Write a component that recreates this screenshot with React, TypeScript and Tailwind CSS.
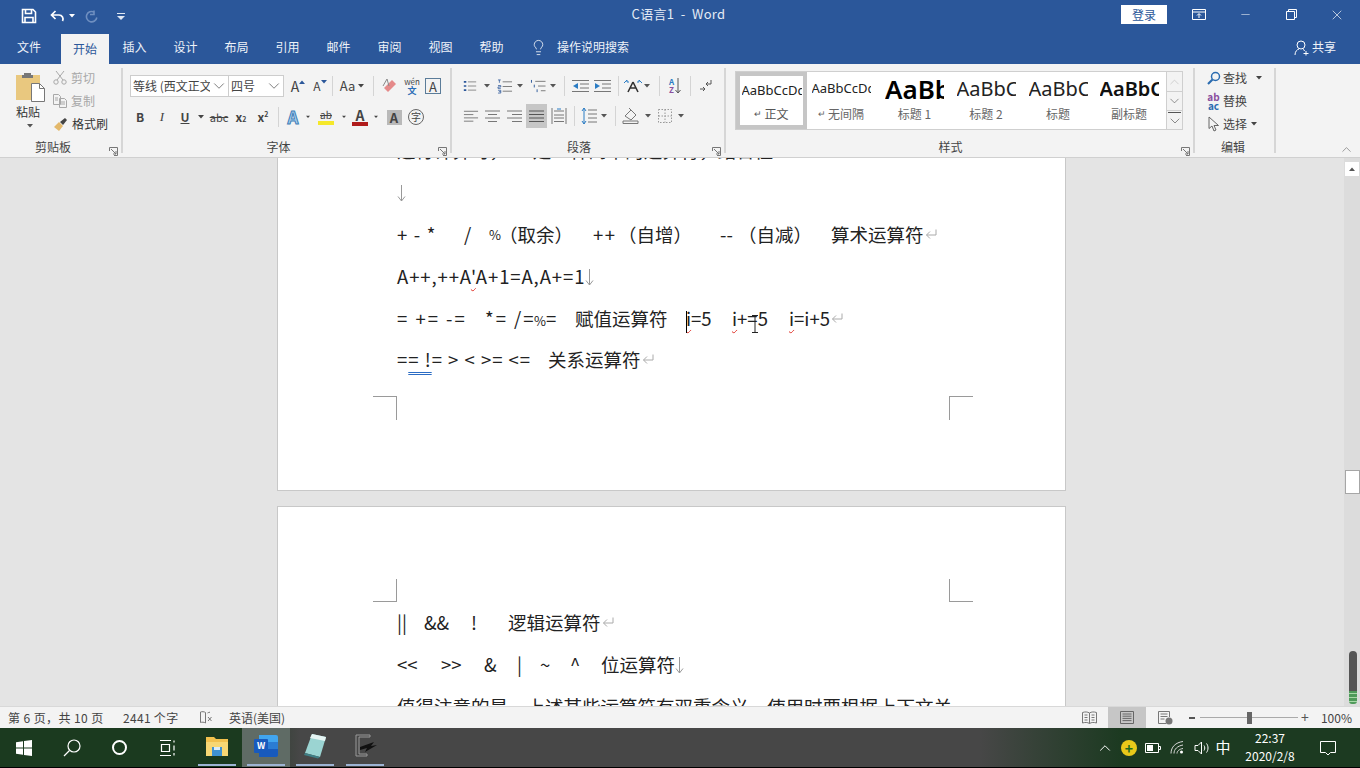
import type { ReactNode } from "react";
import { ChevronDown, ChevronUp, Lightbulb, Minus, X } from "lucide-react";

function Caret({ className = "" }: { className?: string }) {
  return (
    <svg width="6" height="4" viewBox="0 0 6 4" className={className}>
      <path d="M0 0h6L3 3.5z" fill="currentColor" />
    </svg>
  );
}

function Cell({ className = "", children }: { className?: string; children?: ReactNode }) {
  return <div className={`flex h-full shrink-0 items-center justify-center ${className}`}>{children}</div>;
}

function Sep() {
  return <div className="h-[20px] w-px bg-[#d4d4d4]" />;
}

function Launcher() {
  return (
    <svg width="9" height="9" viewBox="0 0 9 9" fill="none" stroke="#777">
      <path d="M.5 4V.5H8.5V8.5H5M2 2l5 5M7 4v3H4" />
    </svg>
  );
}

function Lines({ d, color = "#777" }: { d: string; color?: string }) {
  return (
    <svg width="17" height="16" viewBox="0 0 17 16" fill="none" stroke={color} strokeWidth="1">
      <path d={d} />
    </svg>
  );
}

function Group({
  className,
  label,
  launcher = false,
  children,
  labelClass = "",
}: {
  className: string;
  label: string;
  launcher?: boolean;
  children: ReactNode;
  labelClass?: string;
}) {
  return (
    <div className={`flex h-full shrink-0 flex-col ${className}`}>
      <div className="min-h-0 flex-1">{children}</div>
      <div className={`relative mb-px flex h-[18px] items-center justify-center text-[12px] text-[#444] ${labelClass}`}>
        {label}
        {launcher && (
          <div className="absolute bottom-0 right-[3px] flex">
            <Launcher />
          </div>
        )}
      </div>
    </div>
  );
}

function VSep() {
  return <div className="my-[4px] w-[2px] shrink-0 bg-[#d6d6d6]" />;
}

function TitleBar() {
  return (
    <div className="flex h-[32px] items-center text-white">
      <div className="flex h-full w-[233px] shrink-0 items-center pl-[21px]">
        <svg width="16" height="16" viewBox="0 0 16 16" fill="none" stroke="#fff" strokeWidth="1.6">
          <path d="M1.5 1.5h10.5l2.5 2.500v10.500h-13z" />
          <path d="M4.500 1.500v4h6v-4M4 14.500v-5h8v5" />
        </svg>
        <Cell className="ml-[10px] w-[20px]">
          <svg width="15" height="13" viewBox="0 0 15 13" fill="none" stroke="#fff" strokeWidth="1.7">
            <path d="M5.500 1L1.500 5l4 4M1.500 5H9a4 4 0 0 1 3.500 6" />
          </svg>
        </Cell>
        <Cell className="w-[10px] text-white">
          <Caret />
        </Cell>
        <Cell className="ml-[5px] w-[20px]">
          <svg width="14" height="14" viewBox="0 0 14 14" fill="none" stroke="#6f8fc0" strokeWidth="1.6">
            <path d="M9 1.500v4h-4M9 3a5.200 5.200 0 1 0 2.800 5.500" />
          </svg>
        </Cell>
        <Cell className="ml-[11px] w-[16px]">
          <svg width="8" height="7" viewBox="0 0 8 7" fill="#dfe7f3">
            <path d="M0 0h8v1H0zM0 3h8L4 7z" />
          </svg>
        </Cell>
      </div>
      <div className="flex-1 pb-[4px] pl-[3px] text-center text-[13px] tracking-[0.3px] text-[#e4ebf5]">C语言1&nbsp; -&nbsp; Word</div>
      <div className="mb-[3px] flex h-[19px] w-[46px] shrink-0 items-center justify-center bg-white text-[12px] text-[#2b579a]">
        登录
      </div>
      <div className="ml-[9px] flex h-full shrink-0 pb-[3px]">
        <Cell className="w-[46px]">
          <svg width="14" height="11" viewBox="0 0 14 11" fill="none" stroke="#fff">
            <path d="M.5.500h13v10H.5zM.5 3h13M7 9V5M5 6.500l2-2 2 2" />
          </svg>
        </Cell>
        <Cell className="w-[46px]">
          <Minus size={13} strokeWidth={1} color="#fff" />
        </Cell>
        <Cell className="w-[46px]">
          <svg width="11" height="11" viewBox="0 0 11 11" fill="none" stroke="#fff">
            <path d="M.5 2.500h8v8h-8zM2.500 2.500v-2h8v8h-2" />
          </svg>
        </Cell>
        <Cell className="w-[46px]">
          <X size={16} strokeWidth={1} color="#fff" />
        </Cell>
      </div>
    </div>
  );
}

function TabRow() {
  const tabs = ["插入", "设计", "布局", "引用", "邮件", "审阅", "视图", "帮助"];
  return (
    <div className="flex h-[32px] items-stretch text-[12px] text-[#eef2f8]">
      <Cell className="w-[58px] pb-[2px]">文件</Cell>
      <div className="ml-[3px] mt-[2px] flex w-[48px] shrink-0 items-center justify-center bg-[#f3f3f3] pb-[1px] text-[#2b579a]">开始</div>
      {tabs.map((t) => (
        <Cell key={t} className="w-[51px] pb-[2px]">
          {t}
        </Cell>
      ))}
      <Cell className="w-[42px] pb-[2px]">
        <Lightbulb size={17} strokeWidth={1.1} color="#fff" />
      </Cell>
      <Cell className="ml-[-2px] pb-[2px]">操作说明搜索</Cell>
      <Cell className="ml-auto pb-[2px] pr-[24px]">
        <svg width="16" height="16" viewBox="0 0 16 16" fill="none" stroke="#fff" className="mr-[2px] mt-[2px]">
          <circle cx="7" cy="5" r="4" />
          <path d="M1 15c0-3.500 2-5.500 4-6M9 9.500c.8.3 1.400.7 1.900 1.300M12 11v4.500M9.500 13.500h5" />
        </svg>
        共享
      </Cell>
    </div>
  );
}

function ClipboardGroup() {
  return (
    <Group className="w-[121px]" label="剪贴板" launcher labelClass="pr-[15px]">
      <div className="flex h-full">
        <div className="flex w-[53px] flex-col pl-[16px] pt-[8px]">
          <svg width="30" height="30" viewBox="0 0 30 30">
            <rect x="0" y="3" width="24" height="25" fill="#e9c87f" />
            <path d="M8 3V1h7v2h2v3H6V3z" fill="#777" />
            <path d="M15.500 11.500h8l5 5v13h-13z" fill="#fff" stroke="#777" />
            <path d="M23.500 11.500v5h5" fill="none" stroke="#777" />
          </svg>
          <div className="mt-[1px] text-[12px] leading-[18px] text-[#333]">粘贴</div>
          <div className="ml-[11px] mt-[3px] text-[#555]">
            <Caret />
          </div>
        </div>
        <div className="flex flex-col pt-[2px] text-[12px]">
          <div className="flex h-[23px] items-center gap-[4px] text-[#a8a8a8]">
            <svg width="14" height="14" viewBox="0 0 14 14" fill="none" stroke="#a8a8a8">
              <circle cx="3" cy="11" r="2.200" />
              <circle cx="11" cy="11" r="2.200" />
              <path d="M4 9L11 0M10 9L3 0" />
            </svg>
            剪切
          </div>
          <div className="flex h-[23px] items-center gap-[4px] text-[#a8a8a8]">
            <svg width="14" height="14" viewBox="0 0 14 14" fill="none" stroke="#a8a8a8">
              <path d="M.5.500h5l2 2v8h-7zM6.500 4.500h5l2 2v7h-7zM2 4h3M2 6h3M8 8h4M8 10h4" />
            </svg>
            复制
          </div>
          <div className="ml-[1px] flex h-[23px] items-center gap-[4px] text-[#333]">
            <svg width="14" height="14" viewBox="0 0 14 14">
              <path d="M0 10l5-5 4 4-4 5z" fill="#e3b86a" />
              <path d="M6 5l5-4 2 2-4 5z" fill="#444" />
            </svg>
            格式刷
          </div>
        </div>
      </div>
    </Group>
  );
}

function FontGroup() {
  return (
    <Group className="w-[327px]" label="字体" launcher labelClass="pr-[16px]">
      <div className="pl-[7px] pt-[11px] text-[#444]">
        <div className="flex h-[22px]">
          <div className="flex w-[99px] items-center overflow-hidden border border-[#cdcdcd] bg-white pl-[2px] text-[12px]">
            <span className="w-[77px] shrink-0 overflow-hidden whitespace-nowrap">等线 (西文正文)</span>
            <ChevronDown size={18} strokeWidth={1} color="#555" />
          </div>
          <div className="flex w-[55px] items-center justify-between border border-l-0 border-[#cdcdcd] bg-white pl-[2px] text-[12px]">
            四号
            <ChevronDown size={18} strokeWidth={1} color="#555" />
          </div>
          <Cell className="w-[28px] text-[14px]">
            A<span className="mb-[8px] text-[#2b579a]"><Caret className="rotate-180" /></span>
          </Cell>
          <Cell className="w-[16px] text-[12px]">
            A<span className="mb-[8px] text-[#2b579a]"><Caret /></span>
          </Cell>
          <Cell className="w-[8px]"><Sep /></Cell>
          <Cell className="w-[32px] gap-[3px] text-[13px]">Aa<Caret /></Cell>
          <Cell className="w-[10px]"><Sep /></Cell>
          <Cell className="w-[24px]">
            <svg width="16" height="16" viewBox="0 0 16 16">
              <path d="M6 14l-4-4 8-8 4 4z" fill="#e58a8a" />
              <path d="M1 8l4-7 2 7" fill="none" stroke="#888" />
            </svg>
          </Cell>
          <Cell className="w-[20px] flex-col leading-none">
            <span className="text-[8px] text-[#444]">wén</span>
            <span className="text-[9px] font-bold text-[#2a6db5]">文</span>
          </Cell>
          <Cell className="w-[22px]">
            <span className="flex h-[16px] w-[16px] items-center justify-center border border-[#5b7c99] text-[13px] leading-none">A</span>
          </Cell>
        </div>
        <div className="mt-[9px] flex h-[22px]">
          <Cell className="w-[20px] text-[12px] font-bold">B</Cell>
          <Cell className="w-[24px] font-['Liberation_Serif',serif] text-[13px] italic">I</Cell>
          <Cell className="w-[22px] text-[12px] font-bold underline">U</Cell>
          <Cell className="w-[10px]"><Caret /></Cell>
          <Cell className="w-[26px] text-[11px] line-through">abc</Cell>
          <Cell className="w-[18px] text-[12px] font-bold">x<sub className="text-[7px]">2</sub></Cell>
          <Cell className="w-[26px] text-[12px] font-bold">x<sup className="text-[7px]">2</sup></Cell>
          <Cell className="w-[4px]"><Sep /></Cell>
          <Cell className="w-[26px] text-[17px] font-bold text-[#a9d0ee] [-webkit-text-stroke:1px_#3f7fb8]">A</Cell>
          <Cell className="w-[4px]"><Caret /></Cell>
          <Cell className="w-[32px]">
            <span className="flex flex-col items-center leading-none">
              <span className="text-[10px] leading-[11px] line-through">ab</span>
              <span className="mt-px h-[4px] w-[16px] bg-[#f5e82a]" />
            </span>
          </Cell>
          <Cell className="w-[4px]"><Caret /></Cell>
          <Cell className="w-[28px]">
            <span className="flex flex-col items-center leading-none">
              <span className="text-[14px] font-bold leading-[13px]">A</span>
              <span className="h-[4px] w-[16px] bg-[#b01c1c]" />
            </span>
          </Cell>
          <Cell className="w-[4px]"><Caret /></Cell>
          <Cell className="w-[32px]">
            <span className="flex h-[15px] w-[15px] items-center justify-center bg-[#b9b9b9] text-[13px] font-bold leading-none">A</span>
          </Cell>
          <Cell className="w-[12px]">
            <span className="flex h-[16px] w-[16px] shrink-0 items-center justify-center rounded-full border border-[#666] text-[10px] leading-none">字</span>
          </Cell>
        </div>
      </div>
    </Group>
  );
}

function ParagraphGroup() {
  const bullets = "M6 3h10M6 8h10M6 13h10";
  return (
    <Group className="w-[272px]" label="段落" launcher labelClass="pr-[18px]">
      <div className="pl-[11px] pt-[11px] text-[#555]">
        <div className="flex h-[22px]">
          <Cell className="w-[14px]">
            <svg width="14" height="14" viewBox="0 0 17 16" fill="none" stroke="#777">
              <path d={bullets} />
              <path d="M1 2h3v2H1zM1 7h3v2H1zM1 12h3v2H1z" fill="#2b579a" stroke="none" />
            </svg>
          </Cell>
          <Cell className="w-[20px]"><Caret /></Cell>
          <Cell className="w-[16px]">
            <svg width="16" height="15" viewBox="0 0 17 16" fill="none" stroke="#777">
              <path d={bullets} />
              <path d="M1 1h3M2.500 1v3M1 7h3v1.500H1V10h3M1 12h3v3H1M2 13.500h2" stroke="#2b579a" strokeWidth=".8" />
            </svg>
          </Cell>
          <Cell className="w-[14px]"><Caret /></Cell>
          <Cell className="w-[22px]">
            <svg width="17" height="15" viewBox="0 0 17 16" fill="none" stroke="#777">
              <path d="M5 2.500h11M8 7.500h8M11 12.500h5" />
              <path d="M1 1v3M4 6v3M7 11v3" stroke="#2b579a" />
            </svg>
          </Cell>
          <Cell className="w-[8px]"><Caret /></Cell>
          <Cell className="w-[14px]"><Sep /></Cell>
          <Cell className="w-[19px]">
            <svg width="17" height="14" viewBox="0 0 17 14" fill="none" stroke="#777">
              <path d="M0 1.500h17M8 5h9M8 9h9M0 12.500h17" />
              <path d="M6 4L1 7l5 3z" fill="#2b7cc4" stroke="none" />
            </svg>
          </Cell>
          <Cell className="w-[24px]">
            <svg width="17" height="14" viewBox="0 0 17 14" fill="none" stroke="#777">
              <path d="M0 1.500h17M8 5h9M8 9h9M0 12.500h17" />
              <path d="M1 4l5 3-5 3z" fill="#2b7cc4" stroke="none" />
            </svg>
          </Cell>
          <Cell className="w-[8px]"><Sep /></Cell>
          <Cell className="w-[22px]">
            <svg width="18" height="14" viewBox="0 0 18 14" fill="none">
              <path d="M9 3L4 13M9 3l5 10M6 9h6" stroke="#333" strokeWidth="1.600" />
              <path d="M0 4l3-3v2h2M18 4l-3-3v2h-2" stroke="#2b7cc4" />
            </svg>
          </Cell>
          <Cell className="w-[6px]"><Caret /></Cell>
          <Cell className="w-[18px]"><Sep /></Cell>
          <Cell className="w-[14px] gap-px">
            <span className="flex flex-col text-[8px] font-bold leading-[8px]">
              <span className="text-[#2b7cc4]">A</span>
              <span className="text-[#8a4f9e]">Z</span>
            </span>
            <svg width="6" height="16" viewBox="0 0 6 16" fill="none" stroke="#555">
              <path d="M3 0v15M.5 12L3 15l2.500-3" />
            </svg>
          </Cell>
          <Cell className="w-[16px]"><Sep /></Cell>
          <Cell className="w-[16px]">
            <svg width="12" height="14" viewBox="0 0 12 14" fill="none" stroke="#555">
              <path d="M11 1v4H6M8 3L6 5l2 2M0 10h5M3 8l2 2-2 2" />
            </svg>
          </Cell>
        </div>
        <div className="mt-[7px] flex h-[24px]">
          <Cell className="w-[16px]"><Lines d="M1 3h15M1 6.500h10M1 10h15M1 13.500h10" /></Cell>
          <Cell className="w-[26px]"><Lines d="M1 3h15M4 6.500h9M1 10h15M4 13.500h9" /></Cell>
          <Cell className="w-[19px]"><Lines d="M1 3h15M6 6.500h10M1 10h15M6 13.500h10" /></Cell>
          <Cell className="ml-[2px] w-[21px] bg-[#c6c6c6]"><Lines d="M1 3h15M1 6.500h15M1 10h15M1 13.500h15" color="#555" /></Cell>
          <Cell className="w-[24px]">
            <svg width="16" height="16" viewBox="0 0 16 16" fill="none" stroke="#777">
              <path d="M1 0v16M15 0v16M3 3h10M3 7h10M3 10h10M3 13.500h10" />
              <path d="M6 1h4" stroke="#2b7cc4" />
            </svg>
          </Cell>
          <Cell className="w-[6px]"><Sep /></Cell>
          <Cell className="w-[24px]">
            <svg width="16" height="18" viewBox="0 0 16 18" fill="none" stroke="#777">
              <path d="M7 3h9M7 7h9M7 11h9M7 15h9" />
              <path d="M3 1v16M1 4l2-3 2 3M1 14l2 3 2-3" stroke="#2b7cc4" />
            </svg>
          </Cell>
          <Cell className="w-[6px]"><Caret /></Cell>
          <Cell className="w-[16px]"><Sep /></Cell>
          <Cell className="w-[16px]">
            <svg width="18" height="18" viewBox="0 0 18 18" fill="none" stroke="#777" className="shrink-0">
              <path d="M3 9l6-6 5 5-5 5zM1 16.500h15v-2.500H1z" />
              <path d="M9 3L7 1" />
            </svg>
          </Cell>
          <Cell className="w-[18px]"><Caret /></Cell>
          <Cell className="w-[16px]">
            <svg width="14" height="14" viewBox="0 0 14 14" fill="none" stroke="#999" strokeDasharray="1.500 1.500">
              <path d="M.5.500h13v13H.5zM7 .5v13M.5 7h13" />
            </svg>
          </Cell>
          <Cell className="w-[16px]"><Caret /></Cell>
        </div>
      </div>
    </Group>
  );
}

function StyleItem({
  sample,
  sampleClass,
  label,
  mark = false,
  itemClass,
}: {
  sample: string;
  sampleClass: string;
  label: string;
  mark?: boolean;
  itemClass: string;
}) {
  return (
    <div className={`flex h-full shrink-0 flex-col items-center ${itemClass}`}>
      <div className="flex h-[34px] w-[59px] items-center overflow-hidden whitespace-nowrap font-['Noto_Sans',sans-serif]">
        <span className={sampleClass}>{sample}</span>
      </div>
      <div className="flex h-[16px] items-center text-[12px] text-[#666]">
        {mark && <span className="mr-[2px] text-[9px]">↵</span>}
        {label}
      </div>
    </div>
  );
}

function StylesGroup() {
  return (
    <Group className="w-[467px]" label="样式" launcher labelClass="pr-[18px]">
      <div className="flex pl-[9px] pt-[7px]">
        <div className="flex h-[59px] w-[431px] border-y border-l border-[#cfcfcf] bg-white">
          <div className="flex h-full w-[71px] shrink-0 flex-col items-center border-[4px] border-[#c6c6c6] bg-white">
            <div className="flex h-[29px] w-[60px] items-center overflow-hidden whitespace-nowrap font-['Noto_Sans',sans-serif] text-[13px] leading-none text-[#222]">
              AaBbCcDd
            </div>
            <div className="flex h-[18px] items-center text-[12px] text-[#555]">
              <span className="mr-[2px] text-[9px]">↵</span>正文
            </div>
          </div>
          <StyleItem itemClass="w-[72px] pr-[4px]" sample="AaBbCcDd" sampleClass="text-[13px] text-[#222]" label="无间隔" mark />
          <StyleItem itemClass="w-[71px]" sample="AaBb" sampleClass="text-[26px] font-semibold text-black" label="标题 1" />
          <StyleItem itemClass="w-[72px]" sample="AaBbCc" sampleClass="text-[20px] text-[#222]" label="标题 2" />
          <StyleItem itemClass="w-[72px]" sample="AaBbCc" sampleClass="text-[20px] text-[#222]" label="标题" />
          <StyleItem itemClass="w-[72px] pr-[2px]" sample="AaBbCc" sampleClass="text-[20px] font-semibold text-[#111]" label="副标题" />
        </div>
        <div className="flex h-[59px] w-[17px] flex-col border border-[#cfcfcf]">
          <div className="flex h-[20px] items-center justify-center border-b border-[#cfcfcf]">
            <ChevronUp size={18} strokeWidth={1} color="#bbb" />
          </div>
          <div className="flex h-[19px] items-center justify-center border-b border-[#cfcfcf]">
            <ChevronDown size={18} strokeWidth={1} color="#555" />
          </div>
          <div className="flex h-[18px] flex-col items-center justify-center">
            <span className="h-px w-[13px] bg-[#555]" />
            <ChevronDown size={16} strokeWidth={1} color="#555" />
          </div>
        </div>
      </div>
    </Group>
  );
}

function EditGroup() {
  return (
    <Group className="w-[79px]" label="编辑" labelClass="pr-[3px]">
      <div className="pt-[2px] text-[12px] text-[#444]">
        <div className="flex h-[23px] items-center">
          <Cell className="w-[28px] pl-[9px]">
            <svg width="14" height="14" viewBox="0 0 14 14" fill="none" stroke="#2b6cb0" strokeWidth="1.500">
              <circle cx="8.500" cy="5.500" r="4" />
              <path d="M5.500 8.500L1 13" strokeWidth="2.200" />
            </svg>
          </Cell>
          查找
          <Caret className="ml-[9px]" />
        </div>
        <div className="flex h-[23px] items-center">
          <Cell className="w-[28px] flex-col pl-[9px] text-[10px] font-bold leading-[9px]">
            <span className="text-[#8a4f9e]">ab</span>
            <span className="text-[#2b6cb0]">ac</span>
          </Cell>
          替换
        </div>
        <div className="flex h-[23px] items-center">
          <Cell className="w-[28px] pl-[9px]">
            <svg width="12" height="16" viewBox="0 0 12 16" fill="none" stroke="#666">
              <path d="M1 1v11.500l3-2.500 2 5 2-1-2-4.500h4.500z" />
            </svg>
          </Cell>
          选择
          <Caret className="ml-[4px]" />
        </div>
      </div>
    </Group>
  );
}

function Ribbon() {
  return (
    <div className="flex h-[94px] shrink-0 border-b border-[#d0d0d0] bg-[#f3f3f3]">
      <ClipboardGroup />
      <VSep />
      <FontGroup />
      <VSep />
      <ParagraphGroup />
      <VSep />
      <StylesGroup />
      <VSep />
      <EditGroup />
      <VSep />
      <div className="flex flex-1 items-end justify-end pr-[6px]">
        <ChevronUp size={15} strokeWidth={1} color="#666" />
      </div>
    </div>
  );
}

const Ret = () => (
  <svg width="12" height="12" viewBox="0 0 12 12" fill="none" stroke="#aaa" className="ml-px">
    <path d="M11 1.500V7H1.500M5 3.500L1.500 7 5 10.500" />
  </svg>
);

const Arrow = () => (
  <svg width="9" height="17" viewBox="0 0 9 17" fill="none" stroke="#999" className="mt-[2px]">
    <path d="M4.500 0v16M1 11.500L4.500 16 8 11.500" />
  </svg>
);

function DocLine({ children }: { children: ReactNode }) {
  return <div className="flex h-[42px] items-center whitespace-pre">{children}</div>;
}

function Squiggle({ children }: { children: ReactNode }) {
  return <span className="underline decoration-[#e0332a] decoration-wavy decoration-1 underline-offset-[3px]">{children}</span>;
}

function PageOne() {
  return (
    <div className="h-[362px] border-x border-b border-[#c8c8c8] bg-white pl-[119px]">
      <DocLine>进行计算时，++ 是一种简单的运算符，结合性</DocLine>
      <DocLine><Arrow /></DocLine>
      <DocLine>
        <span className="w-[67px] tracking-[1.2px]">+ - *</span>
        <span className="w-[25px]">/</span>
        <span className="w-[10px] text-[13px]">%</span>
        <span className="w-[94px]">（取余）</span>
        <span className="w-[25px] tracking-[1.5px]">++</span>
        <span className="w-[102px]">（自增）</span>
        <span className="w-[18px]">--</span>
        <span className="w-[93px]">（自减）</span>
        算术运算符<Ret />
      </DocLine>
      <DocLine>
        <span className="tracking-[0.9px]">
          A++,++A<Squiggle>'</Squiggle>A+1=A,A+=1
        </span>
        <Arrow />
      </DocLine>
      <DocLine>
        <span className="w-[88px] tracking-[2px]">= += -=</span>
        <span className="w-[49px] tracking-[2px]">*= /=</span>
        <span className="w-[41px]"><span className="text-[13px]">%</span>=</span>
        <span className="w-[111px]">赋值运算符</span>
        <span className="relative w-[46px]">
          <Squiggle>i</Squiggle>=5
          <span className="absolute left-0 top-[2px] h-[22px] w-px bg-black" />
        </span>
        <span className="relative w-[57px]">
          <Squiggle>i</Squiggle>+=5
          <svg width="8" height="18" viewBox="0 0 8 18" fill="none" stroke="#222" className="absolute left-[19px] top-[6px]">
            <path d="M1 .5h6M1 17.500h6M4 .5v17" />
          </svg>
        </span>
        <span>
          <Squiggle>i</Squiggle>=i+5
        </span>
        <Ret />
      </DocLine>
      <div className="mt-[-1px]">
        <DocLine>
          <span className="w-[151px] tracking-[1px]">
            =<span className="underline decoration-[#2b6cc4] decoration-double decoration-1 underline-offset-[5px]">= !</span>= &gt; &lt; &gt;= &lt;=
          </span>
          关系运算符
          <Ret />
        </DocLine>
      </div>
      <div className="ml-[-24px] mt-[16px] flex w-[600px] justify-between">
        <div className="h-[24px] w-[24px] border-r border-t border-[#9a9a9a]" />
        <div className="h-[24px] w-[24px] border-l border-t border-[#9a9a9a]" />
      </div>
    </div>
  );
}

function PageTwo() {
  return (
    <div className="mt-[15px] h-[300px] border-x border-t border-[#c8c8c8] bg-white pl-[119px] pt-[72px]">
      <div className="ml-[-24px] flex w-[600px] justify-between">
        <div className="h-[23px] w-[24px] border-b border-r border-[#9a9a9a]" />
        <div className="h-[23px] w-[24px] border-b border-l border-[#9a9a9a]" />
      </div>
      <div className="mt-[-1px]">
        <DocLine>
          <span className="w-[27px]">||</span>
          <span className="w-[47px]">&amp;&amp;</span>
          <span className="w-[37px]">!</span>
          逻辑运算符<Ret />
        </DocLine>
        <DocLine>
          <span className="w-[44px]">&lt;&lt;</span>
          <span className="w-[43px]">&gt;&gt;</span>
          <span className="w-[33px]">&amp;</span>
          <span className="w-[23px]">|</span>
          <span className="w-[30px]">~</span>
          <span className="w-[31px]">^</span>
          位运算符<Arrow />
        </DocLine>
        <DocLine>值得注意的是，上述某些运算符有双重含义，使用时要根据上下文关</DocLine>
      </div>
    </div>
  );
}

function Scrollbar() {
  return (
    <div className="flex w-[16px] shrink-0 flex-col items-center bg-[#dcdcdc]">
      <div className="mt-[4px] flex h-[14px] w-[14px] items-center justify-center bg-white text-[#555]">
        <Caret className="rotate-180" />
      </div>
      <div className="mt-[294px] h-[24px] w-[15px] border border-[#a6a6a6] bg-white" />
      <div className="ml-[2px] mt-[157px] h-[40px] w-[8px] rounded-t-[4px] bg-[#555]" />
      <div className="ml-[2px] flex h-[13px] w-[8px] flex-col justify-around rounded-b-[3px] bg-[#4f9a5a]">
        <span className="h-px bg-[#a8d8a8]" />
        <span className="h-px bg-[#a8d8a8]" />
        <span className="h-px bg-[#a8d8a8]" />
      </div>
    </div>
  );
}

function DocArea() {
  return (
    <div className="flex min-h-0 flex-1 overflow-hidden bg-[#e4e4e4]">
      <div className="min-w-0 flex-1 overflow-hidden">
        <div className="ml-[277px] mt-[-29px] w-[789px] text-[18.5px] leading-none text-[#222]">
          <PageOne />
          <PageTwo />
        </div>
      </div>
      <Scrollbar />
    </div>
  );
}

function StatusBar() {
  return (
    <div className="flex h-[22px] shrink-0 items-center border-t border-[#d8d8d8] bg-[#f3f3f3] text-[12px] text-[#444]">
      <div className="w-[123px] shrink-0 pl-[8px] tracking-[0.4px]">第 6 页，共 10 页</div>
      <div className="w-[75px] shrink-0 tracking-[0.3px]">2441 个字</div>
      <Cell className="w-[31px] justify-start">
        <svg width="15" height="13" viewBox="0 0 15 13" fill="none" stroke="#777">
          <path d="M7.500 1.500c-1.500-1-3.500-1-5-.5v10.500c1.500-.5 3.500-.5 5 .5V1.500M9.500 2c1-.5 1.500-.7 2.500-.8M10 6l3.500 4M13.500 6L10 10" />
        </svg>
      </Cell>
      <div>英语(美国)</div>
      <div className="ml-auto flex h-full">
        <Cell className="w-[38px]">
          <svg width="15" height="13" viewBox="0 0 15 13" fill="none" stroke="#777">
            <path d="M7.500 2C5.500.7 3 .7 .5 1.500v10.500c2.500-.8 5-.8 7 .5 2-1.300 4.500-1.300 7-.5V1.500C12 .7 9.500.7 7.500 2zM7.500 2v10.500M2.500 4h3M2.500 6.500h3M2.500 9h3M9.500 4h3M9.500 6.500h3M9.500 9h3" />
          </svg>
        </Cell>
        <Cell className="w-[38px] bg-[#c6c6c6]">
          <svg width="14" height="13" viewBox="0 0 14 13" fill="none" stroke="#666">
            <path d="M.5.500h13v12H.5zM2.500 3h9M2.500 5.200h9M2.500 7.400h9M2.500 9.600h9" />
          </svg>
        </Cell>
        <Cell className="w-[38px]">
          <svg width="15" height="14" viewBox="0 0 15 14" fill="none" stroke="#777">
            <path d="M8 12.500H.5V.5h11V6M2.500 3h7M2.500 5.500h7M2.500 8h4" />
            <circle cx="11" cy="10" r="3.500" fill="#777" stroke="none" />
          </svg>
        </Cell>
        <Cell className="w-[16px]">
          <span className="h-[2px] w-[6px] bg-[#555]" />
        </Cell>
        <div className="relative flex h-full w-[98px] items-center justify-center">
          <span className="absolute inset-x-0 h-px bg-[#aaa]" />
          <span className="relative h-[12px] w-[5px] bg-[#666]" />
        </div>
        <Cell className="w-[14px] text-[14px] text-[#555]">+</Cell>
        <Cell className="w-[48px] justify-end pr-[8px]">100%</Cell>
      </div>
    </div>
  );
}

function TaskCell({ className = "", children }: { className?: string; children: ReactNode }) {
  return (
    <div className={`flex h-full shrink-0 flex-col ${className}`}>
      <div className="flex flex-1 items-center justify-center">{children}</div>
      <div className="mx-[5px] mb-[1px] h-[2px] bg-[#9db4d4]" />
    </div>
  );
}

function Taskbar() {
  return (
    <div className="flex h-[40px] shrink-0 border-b border-black bg-[linear-gradient(90deg,#1b3a1f_0,#1b3a1f_240px,#474747_300px,#474747_980px,#1c3a21_1120px)] text-white">
      <Cell className="w-[48px]">
        <svg width="16" height="16" viewBox="0 0 16 16" fill="#fff">
          <path d="M0 2.200l7-1v6.300H0zM8 1l8-1v7.500H8zM0 8.500h7v6.300l-7-1zM8 8.500h8V16l-8-1.100z" />
        </svg>
      </Cell>
      <Cell className="w-[48px]">
        <svg width="18" height="18" viewBox="0 0 18 18" fill="none" stroke="#fff" strokeWidth="1.200">
          <circle cx="11" cy="7" r="6" />
          <path d="M6.500 11.500L1 17" />
        </svg>
      </Cell>
      <Cell className="w-[47px]">
        <span className="h-[15px] w-[15px] rounded-full border-[2px] border-white" />
      </Cell>
      <Cell className="w-[49px]">
        <svg width="17" height="16" viewBox="0 0 17 16" fill="none" stroke="#fff">
          <path d="M1 .5h11M2.500 4.500h8v7h-8zM1 15.500h11M15 .5v2M15 5.500v5M15 13v2.500" strokeWidth="1.200" />
        </svg>
      </Cell>
      <div className="w-px shrink-0" />
      <TaskCell className="w-[48px]">
        <svg width="22" height="20" viewBox="0 0 22 20">
          <path d="M0 1h8l2 2h12v4H0z" fill="#f2c14e" />
          <path d="M0 6h22v14H0z" fill="#f7d774" />
          <path d="M6 11h10v9H6z" fill="#3f92d2" />
          <path d="M8 11h6v3H8z" fill="#d9ecfa" />
        </svg>
      </TaskCell>
      <div className="w-px shrink-0" />
      <TaskCell className="w-[48px] bg-[#5f6b65]">
        <svg width="24" height="22" viewBox="0 0 24 22">
          <path d="M5 0h17a2 2 0 0 1 2 2v5H5z" fill="#41a5ee" />
          <path d="M5 7h19v7H5z" fill="#2b7cd3" />
          <path d="M5 14h19v6a2 2 0 0 1-2 2H5z" fill="#185abd" />
        </svg>
        <span className="ml-[-24px] flex h-[14px] w-[14px] items-center justify-center rounded-[1px] bg-[#185abd] text-[9px] font-bold">W</span>
        <span className="w-[10px]" />
      </TaskCell>
      <div className="w-px shrink-0" />
      <TaskCell className="w-[48px]">
        <svg width="22" height="26" viewBox="0 0 22 26">
          <path d="M8 1l14 3-6 20L1 20z" fill="#9bd4d2" />
          <path d="M8 1l14 3-1 4L6 5z" fill="#e6f5f4" />
          <path d="M1 20l15 4-2 1.500L0 22z" fill="#3f7f86" />
        </svg>
      </TaskCell>
      <div className="w-[2px] shrink-0" />
      <TaskCell className="w-[48px]">
        <svg width="24" height="26" viewBox="0 0 24 26" fill="none">
          <path d="M3 2h14v2H6v17h8v2H3z" stroke="#9a9a9a" />
          <path d="M7 14l14-5-3 4 6-1-12 7 2-4-7 2z" fill="#111" />
        </svg>
      </TaskCell>
      <div className="ml-auto flex h-full items-center text-[12px]">
        <Cell className="w-[24px]">
          <ChevronUp size={18} strokeWidth={1.3} color="#fff" />
        </Cell>
        <Cell className="w-[24px]">
          <span className="flex h-[16px] w-[16px] items-center justify-center rounded-full bg-[#e8c81a] text-[14px] font-bold leading-none text-[#1c6a1f]">+</span>
        </Cell>
        <Cell className="w-[24px]">
          <svg width="16" height="10" viewBox="0 0 16 10" fill="none" stroke="#fff">
            <path d="M.5.500h13v9H.5zM14 3.500h1.500v3H14" />
            <path d="M2 2h6v6H2z" fill="#fff" stroke="none" />
          </svg>
        </Cell>
        <Cell className="w-[24px]">
          <svg width="14" height="13" viewBox="0 0 14 13" fill="none" stroke="#d8d8d8">
            <path d="M1 12.500C1 6 5.500 1.500 13 .5M4 12.500C4 8 7.500 5 13 4M7 12.500C7 10 9.500 8 13 7.500" />
            <circle cx="11.500" cy="11" r="1.500" fill="#fff" stroke="none" />
          </svg>
        </Cell>
        <Cell className="w-[26px]">
          <svg width="16" height="14" viewBox="0 0 16 14" fill="none" stroke="#fff">
            <path d="M1 4.500h3L7.500 1v12L4 9.500H1zM10 4.500c1 1.500 1 3.500 0 5M12.500 2.500c2 2.500 2 6.500 0 9" />
          </svg>
        </Cell>
        <Cell className="w-[16px] text-[15px]">中</Cell>
        <div className="flex w-[78px] shrink-0 flex-col items-center pb-[1px] leading-[18px]">
          <span>22:37</span>
          <span>2020/2/8</span>
        </div>
        <Cell className="w-[38px]">
          <svg width="16" height="16" viewBox="0 0 16 16" fill="none" stroke="#fff">
            <path d="M.5 1.500h15v11h-5L8 15l-2.500-2.500h-5z" />
          </svg>
        </Cell>
        <div className="w-[13px]" />
      </div>
    </div>
  );
}

export default function App() {
  return (
    <div className="flex h-[768px] w-[1360px] flex-col overflow-hidden bg-[#2b579a] font-['Noto_Sans_CJK_SC','Liberation_Sans',sans-serif]">
      <TitleBar />
      <TabRow />
      <Ribbon />
      <DocArea />
      <StatusBar />
      <Taskbar />
    </div>
  );
}
